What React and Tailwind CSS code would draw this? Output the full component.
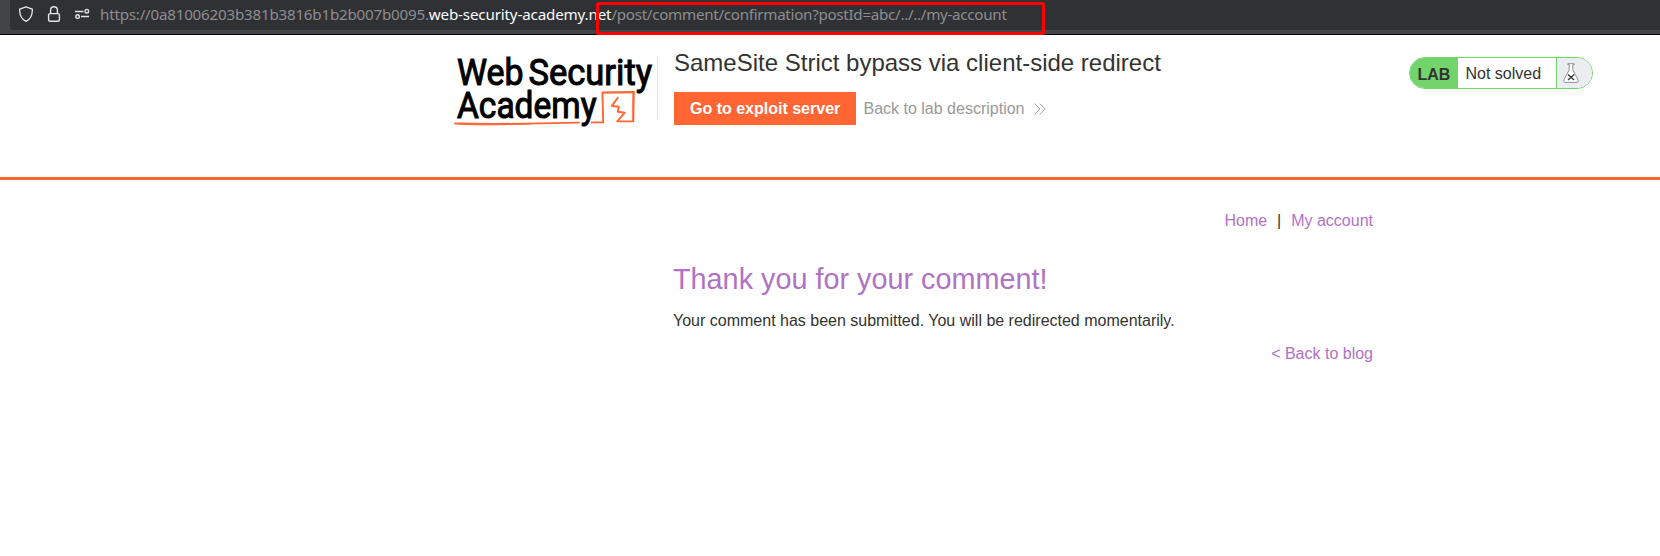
import React from "react";

function AddressBar() {
  return (
    <div className="relative h-[35px] border-b border-black bg-[#42444a] pl-[10px]">
      <div className="flex h-[30px] items-center rounded-bl-[4px] bg-[#303135] font-['Noto_Sans',sans-serif] text-[15.2px] leading-[20px] text-[#8d8d90]">
        <svg className="ml-[8px] h-4 w-4 shrink-0 -translate-y-px" viewBox="0 0 16 16" fill="none" stroke="#e4e4e6" strokeWidth="1.35" strokeLinejoin="round">
          <path d="M8 .8 14.3 3.1C14.6 9 12.2 13.3 8 15.3 3.8 13.3 1.4 9 1.7 3.1Z" />
        </svg>
        <svg className="ml-[12px] h-4 w-4 shrink-0 -translate-y-px" viewBox="0 0 16 16" fill="none" stroke="#e4e4e6" strokeWidth="1.4">
          <rect x="2.6" y="7.6" width="10.8" height="7.6" rx="1.5" />
          <path d="M4.6 7.6V4.2a3.4 3.4 0 0 1 6.8 0v3.4" />
        </svg>
        <svg className="ml-[12px] h-4 w-4 shrink-0 -translate-y-px" viewBox="0 0 16 16" fill="none" stroke="#e4e4e6" strokeWidth="1.4">
          <path d="M1 5.5h8.5M7 10.5h8" />
          <circle cx="12.8" cy="5.2" r="1.8" />
          <circle cx="3.6" cy="10.6" r="1.8" />
        </svg>
        <span className="ml-[10px] -translate-y-px whitespace-nowrap">
          <span className="tracking-[-0.23px]">https://0a81006203b381b3816b1b2b007b0095.</span>
          <span className="tracking-[-0.165px] text-[#fbfbfe]">web-security-academy.net</span>
          <span className="tracking-[-0.3px]">/post/comment/confirmation?postId=abc/../../my-account</span>
        </span>
      </div>
      <div className="absolute left-[596px] top-[2px] h-[33px] w-[449px] rounded-[2px] border-[3px] border-[#fd0000]" />
    </div>
  );
}

function Logo() {
  return (
    <svg className="h-[80px] w-[203px] shrink-0" viewBox="453 50 203 80">
      <g fill="#000" stroke="#000" strokeWidth="1.05" fontFamily="Roboto, sans-serif" fontWeight="400" fontSize="36.8">
        <text x="457" y="85" textLength="66.5" lengthAdjust="spacingAndGlyphs">Web</text>
        <text x="528.5" y="85" textLength="123.5" lengthAdjust="spacingAndGlyphs">Security</text>
        <text x="457" y="117.7" textLength="139.5" lengthAdjust="spacingAndGlyphs">Academy</text>
      </g>
      <g fill="none" stroke="#ff6633" strokeLinecap="round" strokeLinejoin="round">
        <path d="M455 123.5Q495 124.2 540 123.4L579 122.6M591.5 122.4 603.2 122.3" strokeWidth="1.8" />
        <path d="M459 124C475 125.5 500 124.8 530 124" strokeWidth="1" />
        <path d="M603.2 122.3 602.4 92.4 633.8 91.9 633.3 121.4 617.2 121.3 624.6 112.8 617.7 111.7 618.8 106.8 611.8 105.9 617.8 97.8" strokeWidth="1.9" />
        <path d="M603 93.3 633.5 93M632.7 92 632.3 121" strokeWidth=".7" />
      </g>
    </svg>
  );
}

function LabStatus() {
  return (
    <div className="mt-[22px] flex h-[32px] w-[184px] overflow-hidden rounded-full border border-[#72d56b] bg-white">
      <div className="w-[48px] bg-[#72d56b] pl-[7.5px] pt-px text-[16px] font-bold leading-[32px]">LAB</div>
      <div className="w-[98px] pl-[7.5px] pt-px text-[16px] leading-[30px]">Not solved</div>
      <div className="flex flex-1 border-l border-[#72d56b] bg-[#eaeef1] pl-[6px] pt-[5px]">
        <svg className="h-[20px] w-[16px]" viewBox="0 0 16 20" fill="none">
          <path d="M4.8.7H11.2V1.7H9.8V7L15.2 17Q15.9 19.2 14 19.4H2Q.1 19.2.8 17L6.2 7V1.7H4.8Z" fill="#fff" stroke="#777" strokeWidth=".8" />
          <path d="M5 11.5 11.2 17M11.2 11.5 5 17" stroke="#333" strokeWidth="1.3" />
        </svg>
      </div>
    </div>
  );
}

function LabHeader() {
  return (
    <header className="flex h-[145px] border-b-[3px] border-[#ff6633] pl-[453px]">
      <div className="pt-[15px]"><Logo /></div>
      <div className="ml-px mt-[22px] h-[62px] w-px bg-[#e2e2e2]" />
      <div className="ml-[16px] w-[735px] pt-[14px]">
        <h2 className="text-[24px] leading-[28px]">SameSite Strict bypass via client-side redirect</h2>
        <div className="mt-[15px] flex h-[33px] items-center">
          <a className="h-[33px] w-[182px] bg-[#ff6633] pl-[16px] text-[16px] font-bold leading-[33px] text-white">Go to exploit server</a>
          <a className="ml-[7.5px] text-[16px] leading-[33px] text-[#999]">Back to lab description</a>
          <svg className="ml-[9.5px] h-[12px] w-[12px]" viewBox="0 0 12 12" fill="none" stroke="#999" strokeWidth=".9">
            <path d="M.5.5 6 6 .5 11.5M5.7.5 11.2 6 5.7 11.5" />
          </svg>
        </div>
      </div>
      <LabStatus />
    </header>
  );
}

export default function App() {
  return (
    <div className="h-[556px] overflow-hidden bg-white font-['Liberation_Sans',Arial,sans-serif] text-[#333332]">
      <AddressBar />
      <LabHeader />
      <main className="ml-[673px] w-[700px] pt-[31px]">
        <nav className="flex justify-end text-[16px] leading-[20px] text-[#b072c4]">
          <a>Home</a>
          <span className="w-[24px] text-center text-[#333332]">|</span>
          <a>My account</a>
        </nav>
        <h1 className="mt-[31px] text-[28.8px] leading-[34px] text-[#b072c4]">Thank you for your comment!</h1>
        <p className="mt-[15px] text-[16px] leading-[20px]">Your comment has been submitted. You will be redirected momentarily.</p>
        <div className="mt-[13px] text-right text-[16px] leading-[20px] text-[#b072c4]"><a>&lt; Back to blog</a></div>
      </main>
    </div>
  );
}
